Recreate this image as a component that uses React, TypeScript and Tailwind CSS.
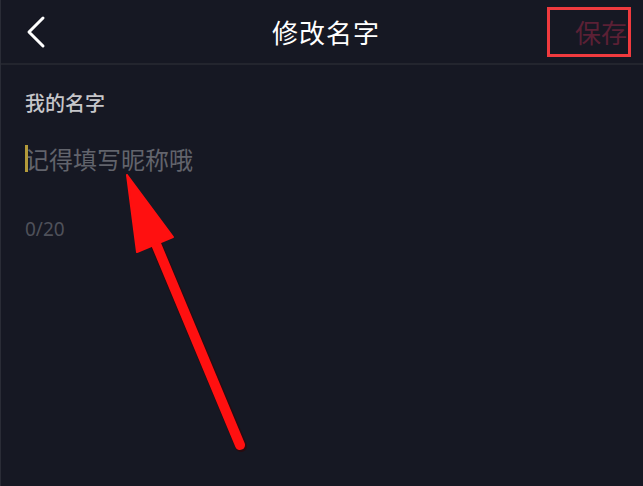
import React from "react";

export default function App() {
  return (
    <div
      className="relative w-[643px] h-[486px] overflow-hidden bg-[#161823] border-l border-[#2a2c36]"
      style={{ fontFamily: '"Noto Sans CJK SC", "Noto Sans", sans-serif' }}
    >
      {/* Header */}
      <div className="h-[65px] grid grid-cols-[1fr_auto_1fr] items-center border-b-2 border-[#23252e]">
        <div className="pl-[24px] flex items-center">
          <svg width="22" height="34" viewBox="0 0 22 34" fill="none">
            <polyline
              points="18,3 4,17 18,31"
              stroke="#ffffff"
              strokeWidth="3"
              strokeLinecap="round"
              strokeLinejoin="round"
            />
          </svg>
        </div>
        <div className="pl-[8px] text-[26px] leading-[26px] text-white tracking-[1px]">修改名字</div>
        <div className="flex justify-end pr-[12px]">
          <div className="w-[84px] h-[50px] border-[3px] border-[#f03a3e] flex items-center justify-end pr-[1px]">
            <span className="text-[26px] leading-[26px] text-[#5b2035]">保存</span>
          </div>
        </div>
      </div>

      {/* Body */}
      <div className="pl-[24px] pt-[28px]">
        <div className="text-[20px] leading-[20px] font-medium text-[#c6c6ca]">我的名字</div>
        <div className="mt-[32px] flex items-center h-[27px]">
          <div className="w-[3px] h-[27px] bg-[#b39a3a] -mr-[3px] relative z-10" />
          <span className="text-[24px] leading-[24px] text-[#62646c]">记得填写昵称哦</span>
        </div>
        <div className="mt-[48px] text-[19px] leading-[18px] text-[#4f515a]" style={{ fontFamily: '"Noto Sans", sans-serif' }}>
          0/20
        </div>
      </div>

      {/* Annotation arrow */}
      <svg className="absolute left-0 top-0" width="643" height="486" viewBox="0 0 643 486">
        <line x1="240" y1="446" x2="150" y2="232" stroke="#3a0000" strokeWidth="12" strokeLinecap="round" opacity="0.5" />
        <line x1="239" y1="445" x2="150" y2="232" stroke="#ff1010" strokeWidth="10" strokeLinecap="round" />
        <polygon points="126,175 172,237 136,252" fill="#ff1010" stroke="#ff1010" strokeWidth="2" strokeLinejoin="round" />
      </svg>
    </div>
  );
}
